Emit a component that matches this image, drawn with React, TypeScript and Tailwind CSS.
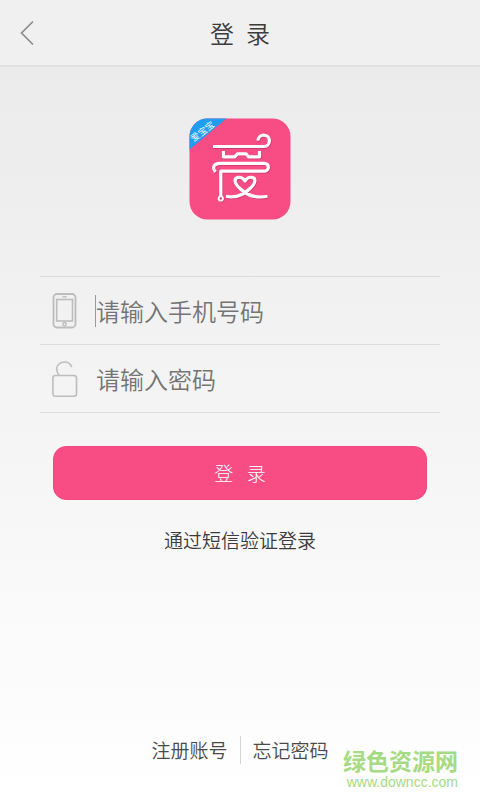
import { FC } from "react";

const BackIcon: FC = () => (
  <svg width="14" height="26" viewBox="0 0 14 26" fill="none" aria-hidden="true">
    <path d="M13 1.5L1.5 13L13 24.5" stroke="#8c8c8c" strokeWidth="1.7" />
  </svg>
);

const PhoneIcon: FC = () => (
  <svg width="26" height="38" viewBox="0 0 26 38" fill="none" stroke="#bdbdbd" aria-hidden="true">
    <rect x="1.5" y="2" width="22" height="33.5" rx="3.5" strokeWidth="1.8" />
    <rect x="4.7" y="7.5" width="15.8" height="21.5" strokeWidth="1.6" />
    <path d="M10.3 4.8H14.8" strokeWidth="1.4" />
    <circle cx="12.5" cy="32.2" r="1.7" strokeWidth="1.4" />
  </svg>
);

const LockIcon: FC = () => (
  <svg width="26" height="38" viewBox="0 0 26 38" fill="none" stroke="#bdbdbd" aria-hidden="true">
    <rect x="0.9" y="15.5" width="23.6" height="20.8" rx="2.5" strokeWidth="1.6" />
    <path d="M7.2 15.5C5.4 13 4.6 11 4.6 9C4.8 5 8.2 2 12.2 2C16 2 18.7 4 19.7 7" strokeWidth="1.6" />
  </svg>
);

const Logo: FC = () => (
  <svg width="102" height="102" viewBox="0 0 102 102" role="img" aria-label="爱宝宝">
    <defs>
      <clipPath id="logo-shape">
        <rect x="0.5" y="0.5" width="101" height="101" rx="18" />
      </clipPath>
    </defs>
    <g clipPath="url(#logo-shape)">
      <rect width="102" height="102" fill="#f84c84" />
      <path d="M0 0H38L0 32Z" fill="#1e9df2" />
    </g>
    <text
      x="15.5"
      y="16"
      fill="#fff"
      fontSize="9"
      textAnchor="middle"
      transform="rotate(-38 15.5 16)"
      className="font-['Noto_Sans_CJK_SC',sans-serif]"
    >
      爱宝宝
    </text>
    {[
      { color: "#c93a70", shift: "translate(0.7 0.8)" },
      { color: "#fff", shift: "translate(0 0)" },
    ].map(({ color, shift }) => (
      <g
        key={color}
        transform={shift}
        fill="none"
        stroke={color}
        strokeWidth="3.2"
        strokeLinejoin="round"
      >
        <path d="M24 28.5H74.5A5.7 5.7 0 1 0 69 22.5" />
        <path d="M34.5 33V38.8H46L48.5 35.8H57L59.5 38.8H70.5V33" />
        <path d="M26.5 54C22.5 49 25.5 45.3 31 45.3H75.5A3.9 3.9 0 0 1 75.5 53.1H31.8V78" />
        <circle cx="31.8" cy="80.5" r="2.2" strokeWidth="1.8" />
        <path d="M37 78.3C47 80.5 54 77.5 61 70.5C67 65 67.5 60 62.5 59.3C59.5 59 57.5 60.5 56 63C54.5 60.5 52.5 59 49.5 59.3C44.5 60 45 65 51 70.5C58 77.5 67 80.5 78.5 78.3" />
      </g>
    ))}
  </svg>
);

const App: FC = () => {
  return (
    <div className="relative flex min-h-screen flex-col bg-linear-to-b from-[#e9e9e9] to-white font-['Noto_Sans_CJK_SC',sans-serif] font-[350] text-[#3c3c3c]">
      <header className="grid h-[67px] grid-cols-[1fr_auto_1fr] items-center border-b-2 border-[#e1e1e1] bg-[#f0f0f0] px-5">
        <button type="button" aria-label="返回" className="justify-self-start">
          <BackIcon />
        </button>
        <h1 className="text-2xl font-[350]">登&ensp;录</h1>
      </header>

      <main className="flex flex-1 flex-col items-center px-10 pt-[51px]">
        <Logo />
        <form className="mt-14 flex w-full flex-col">
          <div className="flex h-[68px] items-center gap-4 border-t border-[#dcdcdc] pl-3">
            <label htmlFor="phone" aria-label="手机号码" className="w-[27px]">
              <PhoneIcon />
            </label>
            <input
              id="phone"
              type="tel"
              placeholder="请输入手机号码"
              className="h-8 min-w-0 flex-1 border-l border-[#9a9a9a] text-2xl outline-none placeholder:text-[#747474]"
            />
          </div>
          <div className="flex h-[69px] items-center gap-4 border-y border-[#dcdcdc] pl-3">
            <label htmlFor="password" aria-label="密码" className="w-[27px]">
              <LockIcon />
            </label>
            <input
              id="password"
              type="password"
              placeholder="请输入密码"
              className="h-8 min-w-0 flex-1 border-l border-transparent text-2xl outline-none placeholder:text-[#747474]"
            />
          </div>
          <button
            type="submit"
            className="mx-[13px] mt-[33px] h-[54px] rounded-[13px] border border-[#ee4a80] bg-[#f84c84] text-[19px] font-light text-white"
          >
            登&ensp; 录
          </button>
        </form>
        <a href="#sms" className="mt-[26px] text-[19px] leading-7">
          通过短信验证登录
        </a>
      </main>

      <footer className="flex items-center justify-center pb-9 text-[19px] leading-7 text-[#4a4a4a]">
        <a href="#register" className="border-r border-[#d5d5d5] pr-3">
          注册账号
        </a>
        <a href="#forgot" className="pl-3">
          忘记密码
        </a>
      </footer>

      <div className="absolute right-[22px] bottom-[10px] flex flex-col items-end font-['Liberation_Sans','Noto_Sans_CJK_SC',sans-serif] text-[#a5db83]">
        <p className="text-[23px] leading-6 font-bold">绿色资源网</p>
        <p className="text-sm leading-4 font-normal">www.downcc.com</p>
      </div>
    </div>
  );
};

export default App;
